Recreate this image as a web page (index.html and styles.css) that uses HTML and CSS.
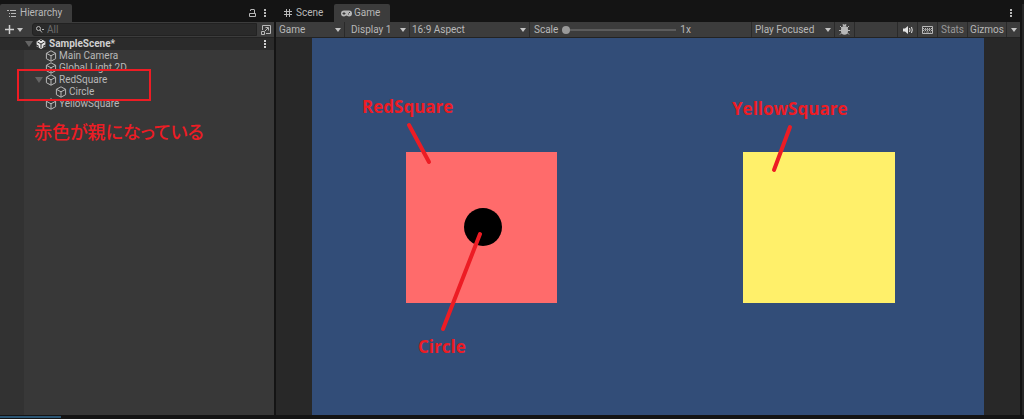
FILE: index.html
```html
<!DOCTYPE html>
<html lang="ja">
<head>
<meta charset="utf-8">
<title>SampleScene</title>
<link rel="stylesheet" href="styles.css">
</head>
<body>
<div class="editor">
  <section class="panel hierarchy">
    <div class="tabs">
      <button class="tab tab--active tab--hierarchy">
        <svg width="9" height="8" viewBox="0 0 9 8" stroke="currentColor"><path d="M0 1.5h2M3 1.5h6M2 4.5h1M4 4.5h5M2 7.5h1M4 7.5h5"/></svg>
        Hierarchy
      </button>
      <button class="icon-button tabs__lock" aria-label="Lock">
        <svg width="7" height="8" viewBox="0 0 7 8" fill="none" stroke="currentColor"><path d="M.5 4.5h6v3h-6zM1.500 2V1q0-.5.5-.5h3q.5 0 .5.5v3.500"/></svg>
      </button>
      <button class="icon-button" aria-label="Menu">
        <svg width="2" height="8" viewBox="0 0 2 8" fill="currentColor"><path d="M0 0h2v2H0zM0 3h2v2H0zM0 6h2v2H0z"/></svg>
      </button>
    </div>
    <div class="toolbar search-bar">
      <button class="add" aria-label="Add">
        <svg width="9" height="9" viewBox="0 0 9 9" stroke="currentColor" stroke-width="1.5"><path d="M4.5 0v9M0 4.5h9"/></svg>
        <span class="arrow"></span>
      </button>
      <label class="search">
        <svg width="8" height="7" viewBox="0 0 8 7" fill="none" stroke="currentColor"><circle cx="2.5" cy="2.5" r="2"/><path d="M4 4l2 2.5M6 3.5h2"/></svg>
        <input type="text" placeholder="All" aria-label="Search">
      </label>
      <button class="icon-button search-bar__picker" aria-label="Open search">
        <svg width="10" height="10" viewBox="0 0 10 10" fill="none" stroke="currentColor"><path d="M1.500 5V.5h8v8H5M.5 6.5h3v3h-3zM4 6l3-3M4.500 2.500h3v3"/></svg>
      </button>
    </div>
    <svg class="symbols" width="0" height="0">
      <symbol id="cube" viewBox="0 0 12 12">
        <path d="M6 .8l4.6 2.5v5.4L6 11.2 1.4 8.7V3.3zM1.4 3.3L6 5.8l4.6-2.5M6 5.8v5.4" fill="none" stroke="currentColor" stroke-linejoin="round"/>
      </symbol>
    </svg>
    <div class="tree">
      <ul>
        <li class="scene">
          <span class="fold"></span>
          <svg width="10" height="10" viewBox="0 0 10 10"><path d="M5 0l4.400 2.500v5L5 10 .6 7.500v-5z" fill="#e4e4e4"/><path d="M5 5V9M5 5L1.500 3M5 5l3.500-2M3.500 0L5 2l1.500-2M0 6l2.200.6L2 9M10 6l-2.200.6L8 9" fill="none" stroke="#2c2c2c"/></svg>
          <span>SampleScene*</span>
          <button class="icon-button scene__menu" aria-label="Scene menu">
            <svg width="2" height="8" viewBox="0 0 2 8" fill="currentColor"><path d="M0 0h2v2H0zM0 3h2v2H0zM0 6h2v2H0z"/></svg>
          </button>
        </li>
        <li class="item"><svg class="cube"><use href="#cube"/></svg>Main Camera</li>
        <li class="item"><svg class="cube"><use href="#cube"/></svg>Global Light 2D</li>
        <li class="item item--parent"><span class="fold"></span><svg class="cube"><use href="#cube"/></svg>RedSquare</li>
        <li class="item item--child"><svg class="cube"><use href="#cube"/></svg>Circle</li>
        <li class="item"><svg class="cube"><use href="#cube"/></svg>YellowSquare</li>
      </ul>
      <div class="mark"></div>
      <p class="note">赤色が親になっている</p>
    </div>
  </section>

  <section class="panel game">
    <div class="tabs">
      <button class="tab">
        <svg width="8" height="8" viewBox="0 0 8 8" stroke="currentColor"><path d="M2.500 0v8M5.500 0v8M0 2.500h8M0 5.500h8"/></svg>
        Scene
      </button>
      <button class="tab tab--active">
        <svg width="11" height="7" viewBox="0 0 11 7"><path d="M3 .5h5a3 3 0 0 1 0 6c-1.200 0-1.500-1-2.500-1s-1.300 1-2.500 1a3 3 0 0 1 0-6z" fill="currentColor"/><path d="M3 2v3M1.500 3.500h3M7 4h1M8 2.500h1" stroke="#3c3c3c"/></svg>
        Game
      </button>
      <button class="icon-button tabs__menu" aria-label="Menu">
        <svg width="2" height="8" viewBox="0 0 2 8" fill="currentColor"><path d="M0 0h2v2H0zM0 3h2v2H0zM0 6h2v2H0z"/></svg>
      </button>
    </div>
    <div class="toolbar">
      <label class="drop drop--view"><select aria-label="View"><option>Game</option></select><span class="arrow"></span></label>
      <label class="drop drop--display"><select aria-label="Display"><option>Display 1</option></select><span class="arrow"></span></label>
      <label class="drop drop--aspect"><select aria-label="Aspect"><option>16:9 Aspect</option></select><span class="arrow"></span></label>
      <div class="scale">
        <label for="scale">Scale</label>
        <input type="range" id="scale" min="1" max="5" value="1">
        <output for="scale">1x</output>
      </div>
      <label class="drop drop--play"><select aria-label="Play mode"><option>Play Focused</option></select><span class="arrow"></span></label>
      <button class="tool" aria-label="Debug">
        <svg width="11" height="11" viewBox="0 0 11 11" fill="currentColor"><path d="M3.500 2.500a2 2 0 0 1 4 0z"/><ellipse cx="5.500" cy="6.500" rx="3.600" ry="4.200"/><path d="M1 2l2 2M10 2L8 4M0 6.500h11M1 10.500l2-2M10 10.500l-2-2M4 0l.7 1.500M7 0l-.7 1.500" stroke="currentColor"/></svg>
      </button>
      <span class="spacer"></span>
      <button class="tool tool--bright" aria-label="Mute audio">
        <svg width="10" height="8" viewBox="0 0 10 8" fill="currentColor"><path d="M0 2.500h2L5 0v8L2 5.500H0z"/><path d="M6.500 2q1 2 0 4M8.500 1q1.500 3 0 6" fill="none" stroke="currentColor"/></svg>
      </button>
      <button class="tool" aria-label="Shortcuts">
        <svg width="11" height="8" viewBox="0 0 11 8" fill="none" stroke="currentColor"><path d="M.5.5h10v7H.5z"/><path d="M1 2.500h9M1 4.500h9" stroke-dasharray="1 1"/><path d="M2 6h1M4 6h3M8 6h1M2 3.500h7" stroke-opacity=".7"/></svg>
      </button>
      <button class="tool tool--stats">Stats</button>
      <button class="tool tool--gizmos">Gizmos</button>
      <button class="tool tool--more" aria-label="Gizmo options"><span class="arrow"></span></button>
    </div>
    <div class="view">
      <svg class="stage" viewBox="0 0 672 377">
        <rect width="672" height="377" fill="#324d78"/>
        <rect x="94" y="114" width="151" height="151" fill="#ff6b6b"/>
        <circle cx="171" cy="189" r="19"/>
        <rect x="431" y="114" width="152" height="151" fill="#fff06a"/>
        <g class="stage__lines">
          <path d="M97 87l20 37"/>
          <path d="M168 196l-37 95"/>
          <path d="M478 89l-16 43"/>
        </g>
        <g class="stage__labels">
          <text x="50" y="75">RedSquare</text>
          <text x="420" y="77">YellowSquare</text>
          <text x="106" y="315">Circle</text>
        </g>
      </svg>
    </div>
  </section>
  <div class="edge"></div>
</div>
<footer class="status"><div class="status__bar"></div></footer>
</body>
</html>
```
FILE: styles.css
```css
* {
  box-sizing: border-box;
  margin: 0;
  padding: 0;
}

body {
  display: flex;
  flex-direction: column;
  height: 100vh;
  overflow: hidden;
  background: #141414;
  color: #b8b8b8;
  font: 10px/12px Roboto, sans-serif;
}

button,
input,
select {
  border: 0;
  background: none;
  color: inherit;
  font: inherit;
}

svg {
  flex: none;
}

ul {
  list-style: none;
}

.symbols {
  position: absolute;
}

.editor {
  flex: 1;
  min-height: 0;
  display: flex;
  gap: 2px;
}

.panel {
  display: flex;
  flex-direction: column;
}

.hierarchy {
  flex: 0 0 274px;
}

.game {
  flex: 1;
  min-width: 0;
}

.edge {
  width: 2px;
  margin-top: 4px;
  background: #262626;
}

/* tabs */
.tabs {
  display: flex;
  align-items: center;
  height: 22px;
  padding-top: 4px;
}

.tab {
  display: flex;
  align-items: center;
  gap: 4px;
  height: 18px;
  padding: 0 8px;
}

.tab--active {
  background: #3c3c3c;
  border-radius: 2px 2px 0 0;
}

.tab--hierarchy {
  width: 72px;
  padding: 0 7px;
}

.game .tab {
  width: 58px;
}

.game .tab--active {
  width: 56px;
  padding: 0 7px;
  gap: 2px;
}

.icon-button {
  display: flex;
  align-items: center;
  justify-content: center;
  width: 10px;
  height: 12px;
}

.tabs__lock {
  margin-left: auto;
  margin-right: 3px;
}

.hierarchy .tabs {
  padding-right: 4px;
}

.tabs__menu {
  margin-left: auto;
  margin-right: 4px;
}

/* toolbar */
.toolbar {
  display: flex;
  height: 16px;
  background: #3c3c3c;
  border-bottom: 1px solid #232323;
}

.arrow {
  border: 3px solid transparent;
  border-top: 4px solid #c4c4c4;
  border-bottom: 0;
}

.search-bar {
  align-items: center;
}

.add {
  display: flex;
  align-items: center;
  gap: 3px;
  width: 32px;
  padding-left: 5px;
  color: #d0d0d0;
}

.search {
  flex: 1;
  display: flex;
  align-items: center;
  gap: 3px;
  height: 13px;
  padding-left: 3px;
  background: #2a2a2a;
  border: 1px solid #222;
  border-radius: 3px 0 0 3px;
}

.search input {
  width: 100%;
  outline: 0;
}

.search input::placeholder {
  color: #6c6c6c;
}

.search-bar__picker {
  width: 17px;
}

.drop {
  display: flex;
  align-items: center;
  border-right: 1px solid #2a2a2a;
  padding: 0 3px;
}

.drop select {
  flex: 1;
  min-width: 0;
  appearance: none;
  outline: 0;
}

.drop--view {
  width: 69px;
}

.drop--display {
  width: 65px;
  padding-left: 6px;
}

.drop--aspect {
  width: 120px;
  padding-left: 2px;
}

.drop--play {
  width: 83px;
}

.scale {
  flex: 1;
  display: flex;
  align-items: center;
  gap: 4px;
  padding-left: 4px;
  border-right: 1px solid #2a2a2a;
}

.scale input {
  width: 114px;
  height: 10px;
  appearance: none;
}

.scale input::-webkit-slider-runnable-track {
  height: 2px;
  background: #5c5c5c;
}

.scale input::-webkit-slider-thumb {
  appearance: none;
  width: 8px;
  height: 8px;
  margin-top: -3px;
  border-radius: 50%;
  background: #999;
}

.tool {
  display: flex;
  align-items: center;
  justify-content: center;
  width: 20px;
  border-right: 1px solid #2a2a2a;
}

.tool--bright {
  color: #e4e4e4;
}

.tool--stats {
  width: 30px;
  color: #999;
}

.tool--gizmos {
  width: 39px;
}

.tool--more {
  width: 13px;
  border-right: 0;
}

.spacer {
  width: 43px;
  border-right: 1px solid #2a2a2a;
}

/* tree */
.tree {
  flex: 1;
  position: relative;
  background: linear-gradient(to right, #323232 24px, #383838 24px);
}

.tree li {
  display: flex;
  align-items: center;
  height: 12px;
}

.scene {
  gap: 3px;
  padding: 0 4px 0 25px;
  background: #2b2b2b;
  color: #d0d0d0;
  font-weight: 700;
}

.scene__menu {
  margin-left: auto;
}

.item {
  gap: 2px;
  padding-left: 45px;
}

.item--parent {
  padding-left: 35px;
}

.item--child {
  padding-left: 55px;
}

.cube {
  width: 12px;
  height: 12px;
}

.fold {
  border: 4px solid transparent;
  border-top: 6px solid #646464;
  border-bottom: 0;
}

.mark {
  position: absolute;
  left: 17px;
  top: 31px;
  width: 134px;
  height: 32px;
  border: 2px solid #ed1c24;
}

.note {
  padding: 9px 0 0 34px;
  color: #ed1c24;
  font: 500 18px/24px "Noto Sans CJK JP", sans-serif;
  font-feature-settings: "palt";
}

/* game view */
.view {
  flex: 1;
  min-height: 0;
  display: flex;
  justify-content: center;
  background: #282828;
}

.stage {
  height: 100%;
  max-width: 100%;
  aspect-ratio: 672 / 377;
}

.stage__lines {
  fill: none;
  stroke: #ed1c24;
  stroke-width: 4px;
  stroke-linecap: round;
}

.stage__labels {
  fill: #ed1c24;
  font: bold 17px "Open Sans", sans-serif;
}

.status {
  height: 4px;
  padding-top: 1px;
}

.status__bar {
  width: 61px;
  height: 2px;
  background: #2c5674;
}
```
